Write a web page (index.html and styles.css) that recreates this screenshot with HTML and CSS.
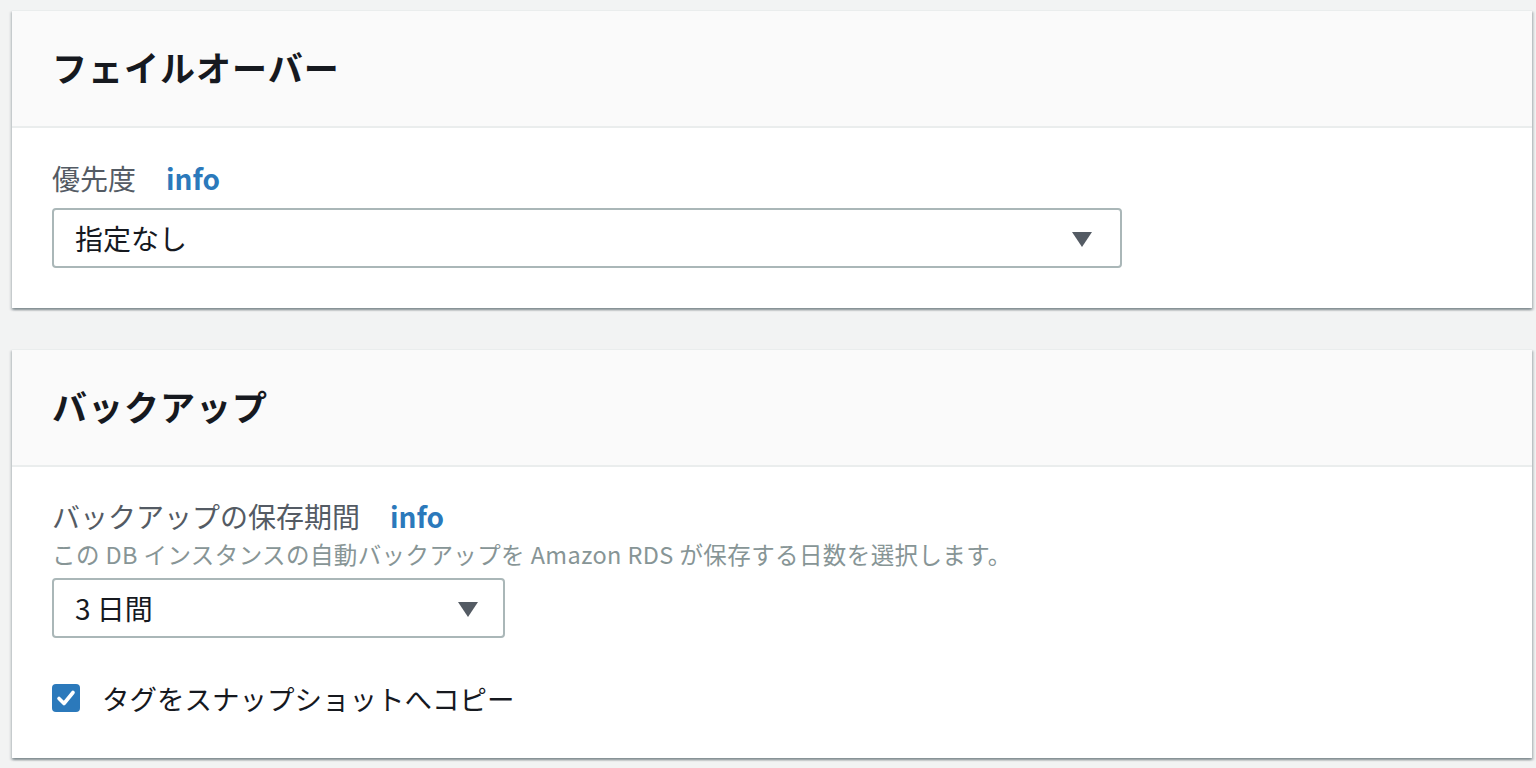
FILE: index.html
```html
<!DOCTYPE html>
<html lang="ja">
<head>
<meta charset="utf-8">
<link rel="stylesheet" href="styles.css">
</head>
<body>
<div class="page">
  <section class="card">
    <header class="card-header"><h2>フェイルオーバー</h2></header>
    <div class="card-body">
      <div class="label"><span>優先度</span><a class="info">info</a></div>
      <div class="select wide">
        <span class="value">指定なし</span>
        <span class="caret"></span>
      </div>
    </div>
  </section>
  <section class="card">
    <header class="card-header"><h2>バックアップ</h2></header>
    <div class="card-body tight">
      <div class="label with-desc"><span>バックアップの保存期間</span><a class="info">info</a></div>
      <div class="desc">この DB インスタンスの自動バックアップを Amazon RDS が保存する日数を選択します。</div>
      <div class="select narrow">
        <span class="value">3 日間</span>
        <span class="caret"></span>
      </div>
      <label class="check">
        <span class="box"><svg viewBox="0 0 28 28" width="28" height="28"><path d="M7 14.5 L12 19.5 L21 8.5" fill="none" stroke="#fff" stroke-width="3.6" stroke-linecap="round" stroke-linejoin="round"/></svg></span>
        <span class="check-label">タグをスナップショットへコピー</span>
      </label>
    </div>
  </section>
</div>
</body>
</html>
```

FILE: styles.css
```css
html, body {
  margin: 0;
  padding: 0;
  background: #f2f3f3;
  font-family: "Noto Sans CJK JP", "Noto Sans", sans-serif;
  color: #16191f;
}
.page {
  padding: 10px 4px 10px 12px;
  display: flex;
  flex-direction: column;
  gap: 41px;
}
.card {
  background: #fff;
  border-top: 1px solid #eaeded;
  box-shadow: 0 2px 2px 0 rgba(0, 28, 36, 0.3), 2px 2px 2px 0 rgba(0, 28, 36, 0.15), -2px 2px 2px 0 rgba(0, 28, 36, 0.1);
}
.card-header {
  background: #fafafa;
  height: 115px;
  border-bottom: 2px solid #eaeded;
  display: flex;
  align-items: center;
  padding: 0 40px;
}
.card-header h2 {
  margin: 0;
  font-size: 35px;
  font-weight: 700;
  letter-spacing: 1px;
  color: #16191f;
  line-height: 1;
  padding-bottom: 4px;
}
.card-body {
  padding: 30px 40px 40px;
}
.card-body.tight {
  padding-top: 29px;
}
.label {
  height: 40px;
  line-height: 40px;
  font-size: 28px;
  color: #545b64;
  display: flex;
  gap: 30px;
  margin-bottom: 10px;
}
.label.with-desc {
  height: 41px;
  line-height: 41px;
  margin-bottom: 0;
}
.info {
  color: #2b79bb;
  font-weight: 700;
  font-size: 28px;
}
.desc {
  font-size: 23.5px;
  line-height: 35px;
  height: 35px;
  letter-spacing: 0.4px;
  color: #879596;
  margin-bottom: 6px;
}
.select {
  box-sizing: border-box;
  height: 60px;
  border: 2px solid #aab7b8;
  border-radius: 4px;
  display: flex;
  align-items: center;
  justify-content: space-between;
  padding: 0 28px 0 21px;
  background: #fff;
}
.select.wide { width: 1070px; }
.select.narrow { width: 453px; padding-right: 25px; }
.value {
  font-size: 28px;
  color: #16191f;
}
.caret {
  width: 0;
  height: 0;
  border-left: 10px solid transparent;
  border-right: 10px solid transparent;
  border-top: 15px solid #545b64;
  margin-top: 2px;
}
.check {
  display: flex;
  align-items: center;
  gap: 22px;
  height: 40px;
  margin-top: 40px;
}
.box {
  width: 28px;
  height: 28px;
  border-radius: 4px;
  background: #2b79bb;
  display: block;
}
.box svg { display: block; }
.check-label {
  font-size: 27.5px;
  color: #16191f;
}
```
